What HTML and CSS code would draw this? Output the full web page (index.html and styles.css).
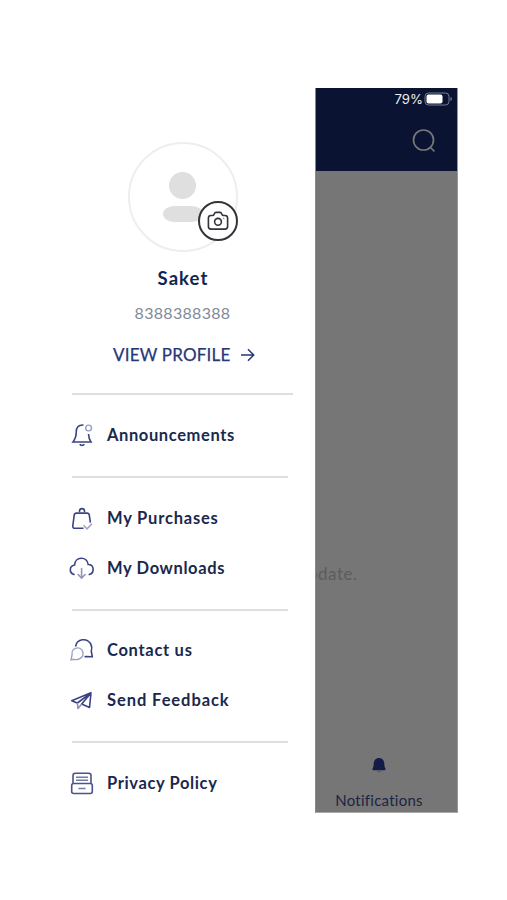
FILE: index.html
```html
<!DOCTYPE html>
<html lang="en">
<head>
<meta charset="utf-8">
<title>Profile menu</title>
<link rel="stylesheet" href="styles.css">
</head>
<body>
<div class="screen">
  <aside class="drawer">
    <div class="avatar">
      <span class="head"></span>
      <span class="shoulders"></span>
      <span class="camera">
        <svg width="22" height="20" viewBox="0 0 22 20" fill="none" stroke="#333438" stroke-width="1.6" stroke-linejoin="round"><path d="M4 4.500h1.500c1 0 1.300-.6 1.800-1.700C7.700 1.700 8 1.400 9 1.400h4c1 0 1.300.300 1.700 1.400.500 1.100.800 1.700 1.800 1.700H18q2.600 0 2.600 2.600v8.400q0 2.600-2.600 2.600H4q-2.600 0-2.600-2.600V7.100Q1.400 4.500 4 4.500z"/><circle cx="11" cy="10.800" r="3.400"/><circle cx="16.600" cy="7.300" r=".9" stroke="none" fill="#dd8990"/></svg>
      </span>
    </div>
    <h1 class="name">Saket</h1>
    <p class="phone">8388388388</p>
    <a class="view"><span class="view-label">VIEW PROFILE</span>
      <svg width="15" height="14" viewBox="0 0 15 14" fill="none" stroke="#293777" stroke-width="1.500"><path d="M1 7h12.500M8 1.200 13.700 7 8 12.800"/></svg>
    </a>
    <hr class="rule wide">
    <nav class="menu">
      <a class="item">
        <svg class="icon" viewBox="0 0 26 26" fill="none" stroke="#3b4481" stroke-width="1.600"><path d="M14.500 3C9 2.600 7.300 6 7.300 9.500c0 5.500-1 7.500-3.300 10.500h18c-1.800-2.500-2.300-4.500-2.500-8"/><path d="M10.800 22.200c.800 1.700 3.600 1.700 4.400 0"/><circle cx="19.600" cy="6" r="2.900" stroke="#989dbd" stroke-width="1.400"/></svg>
        <span class="announcements">Announcements</span></a>
      <hr class="rule">
      <a class="item">
        <svg class="icon" viewBox="0 0 26 26" fill="none" stroke="#3b4481" stroke-width="1.600"><path d="M14.500 23.300H6q-2.500 0-2.200-2.500L5.200 10.100q.3-2 2.300-2h10.500q2 0 2.300 2l1.100 7.500M10.500 7V6c0-3.200 5-3.200 5 0v1"/><path stroke="#a2a6c4" d="m14.500 20.300 3.500 3.500 5-5"/></svg>
        <span class="purchases">My Purchases</span></a>
      <a class="item">
        <svg class="icon" viewBox="0 0 26 26" fill="none" stroke="#3b4481" stroke-width="1.600" stroke-linecap="round"><path d="M5 19.500C0 18 0 11 5.600 10 6 1.500 18 .800 19.200 9.500c6.300 0 6.500 8.500 1.100 10"/><path stroke="#9292bd" d="M12.600 13.500v9.500M9.100 19.500l3.500 3.500 3.500-3.500"/></svg>
        <span class="downloads">My Downloads</span></a>
      <hr class="rule tight">
      <a class="item">
        <svg class="icon" viewBox="0 0 26 26" fill="none" stroke="#3b4481" stroke-width="1.600"><path d="M6.500 9.500C8 1.500 18 .500 21.800 7c1.500 2.800 1.100 5.200.500 7.500l1 5.200-6.300-.2-1.500.300"/><path stroke="#9da2c4" stroke-width="1.400" d="M3.100 17.700c-1.300-7.500 9-9.300 10.800-2.500 1.200 6-5 8.200-8.900 7.100l-3 .5z"/></svg>
        <span class="contact">Contact us</span></a>
      <a class="item">
        <svg class="icon" viewBox="0 0 26 26" fill="none" stroke="#3b4481" stroke-width="1.600" stroke-linejoin="round"><path d="M22.500 5.500 2.700 13.800l5.600 2.200L22 6l-1.500 14.500-7.800-3.400L22 6"/><path stroke="#8b90b8" d="m8.300 15.800.7 5.700 3.700-4.400"/></svg>
        <span class="feedback">Send Feedback</span></a>
      <hr class="rule">
      <a class="item">
        <svg class="icon" viewBox="0 0 26 26" fill="none" stroke="#4a538e" stroke-width="1.600"><path d="M4 13.500v-8Q4 3.200 6.300 3.200h13.400Q22 3.200 22 5.500v8"/><rect x="2.700" y="13.500" width="20.600" height="10" rx="2"/><path d="M7 7.200h12M7 10.200h12M9.500 18.500h7" stroke="#7179a8"/></svg>
        <span class="privacy">Privacy Policy</span></a>
    </nav>
  </aside>
  <main class="page">
    <header class="bar">
      <div class="status"><span>79%</span>
        <svg width="29" height="14" viewBox="0 0 29 14"><rect x="1" y="1" width="24" height="12" rx="3.500" fill="none" stroke="#777d91"/><rect x="2.500" y="2.500" width="16" height="9" rx="2" fill="#fff"/><path d="M26.500 5v4q1.500-.5 1.500-2t-1.500-2z" fill="#777d91"/></svg>
      </div>
      <svg class="search" width="24" height="24" viewBox="0 0 24 24" fill="none" stroke="#77777a" stroke-width="1.700"><circle cx="11.500" cy="11" r="10"/><path d="m18.500 18.500 4 4"/></svg>
    </header>
    <p class="update">pdate.</p>
    <footer class="tab">
      <svg width="14" height="17" viewBox="0 0 14 17"><path d="M1.700 7c0-8 10.600-8 10.600 0 .200 3 .500 3.500 1.100 4.600.400 1-.2 1.700-1.300 1.700H1.900C.8 13.300.2 12.600.6 11.600 1.300 10.500 1.500 10 1.700 7z" fill="#131b46"/><path d="M5.200 14h3.600q-1.800 2.600-3.600 0z" fill="#51556a"/></svg>
      <span>Notifications</span>
    </footer>
  </main>
</div>
</body>
</html>
```
FILE: styles.css
```css
* { box-sizing: border-box; }
body { margin: 0; padding-top: 88px; height: 900px; background: #fff; font-family: Lato, sans-serif; }
h1, p, hr { margin: 0; }
.screen { display: flex; width: 458px; height: 725px; }
.drawer { width: 315px; padding: 54px 22px 0 72px; display: flex; flex-direction: column; }
.avatar { position: relative; width: 110px; height: 110px; margin-left: 56px; border: 2px solid #eeeeee; border-radius: 50%; display: flex; flex-direction: column; align-items: center; padding-top: 28px; }
.head { width: 27px; height: 27px; border-radius: 50%; background: #dfdfdf; margin-left: -2px; }
.shoulders { width: 40px; height: 16px; margin-top: 7px; margin-left: -1px; border-radius: 12px / 8px; background: #dfdfdf; }
.camera { position: absolute; left: 68px; top: 57px; width: 40px; height: 40px; border: 2px solid #333438; border-radius: 50%; background: #fff; display: flex; align-items: center; justify-content: center; }
.name { width: 222px; margin-top: 15px; text-align: center; font-size: 18.5px; line-height: 22px; color: #10264e; letter-spacing: 1.1px; }
.phone { width: 221px; margin-top: 13px; text-align: center; font-size: 16px; line-height: 22px; color: #818a99; letter-spacing: .3px; }
.view { display: flex; align-items: center; gap: 10px; margin: 20px 0 0 41px; height: 22px; font-size: 17px; line-height: 22px; color: #293777; letter-spacing: .2px; -webkit-text-stroke: .25px #293777; }
.rule { border: 0; height: 2px; width: 216px; background: #dfdfdf; margin: 16px 0 15px; }
.wide { width: 221px; margin: 27px 0 15px; }
.tight { margin-bottom: 14px; }
.item { display: flex; align-items: center; gap: 12px; height: 50px; margin-left: -3px; font-size: 16.5px; font-weight: 700; color: #19294e; white-space: nowrap; }
.announcements { letter-spacing: .6px; }
.purchases { letter-spacing: .8px; }
.downloads { letter-spacing: .62px; }
.contact { letter-spacing: .7px; }
.feedback { letter-spacing: .92px; }
.privacy { letter-spacing: .62px; }
.icon { width: 26px; height: 26px; flex: none; }
.page { width: 143px; background: #767676; border-left: 1px solid #898989; border-right: 1px solid #999; border-bottom: 1px solid #aaa; overflow: hidden; display: flex; flex-direction: column; }
.bar { height: 83px; background: #0a1432; flex: none; display: flex; flex-direction: column; align-items: flex-end; }
.status { display: flex; align-items: center; height: 16px; margin: 3px 4px 0 0; gap: 1px; color: #eee; font: 13.2px/16px Inter, sans-serif; }
.search { margin: 22px 21px 0 0; }
.update { margin: 392px 0 0 -8px; font-size: 17px; line-height: 22px; color: #5c5c5e; letter-spacing: .5px; }
.tab { margin-top: auto; margin-left: 19px; width: 88px; display: flex; flex-direction: column; align-items: center; font-size: 15px; line-height: 20px; color: #202344; padding-bottom: 2px; letter-spacing: .25px; }
.tab span { margin-top: 16px; }
```
